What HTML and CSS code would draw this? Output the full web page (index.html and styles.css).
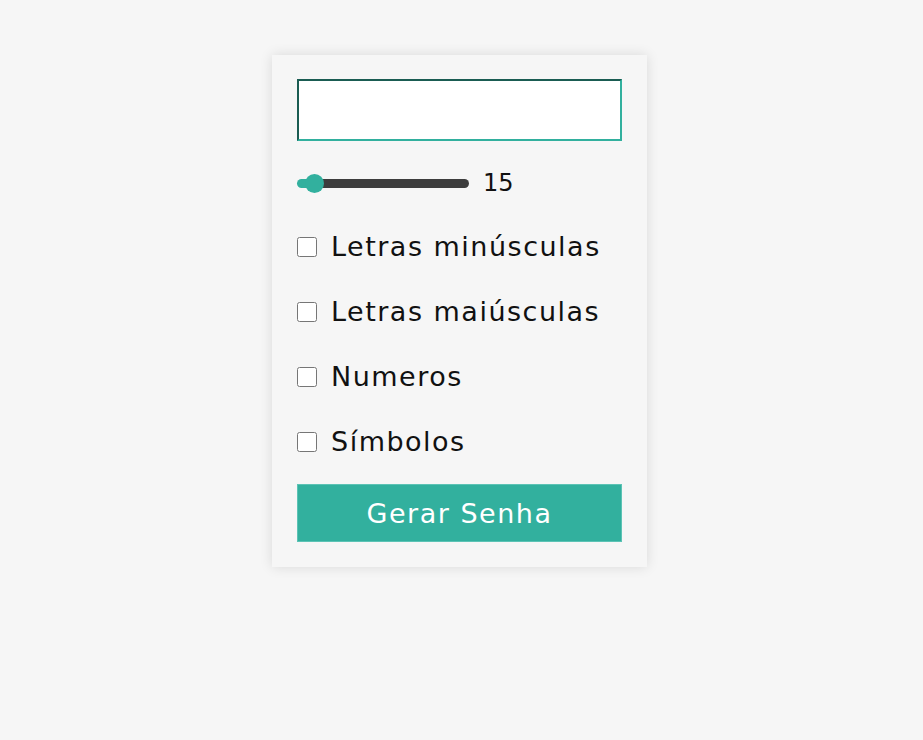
FILE: index.html
```html
<!DOCTYPE html>
<html lang="pt">
<head>
<meta charset="utf-8">
<title>Gerador de Senha</title>
<link rel="stylesheet" href="styles.css">
</head>
<body>
<main class="page">
  <section class="card">
    <input class="output" type="text" readonly>
    <div class="range-row">
      <input class="slider" type="range" min="12" max="70" value="15">
      <span class="range-value">15</span>
    </div>
    <label class="option"><input type="checkbox" class="check"><span>Letras minúsculas</span></label>
    <label class="option"><input type="checkbox" class="check"><span>Letras maiúsculas</span></label>
    <label class="option"><input type="checkbox" class="check"><span>Numeros</span></label>
    <label class="option"><input type="checkbox" class="check"><span>Símbolos</span></label>
    <button class="generate" type="button">Gerar Senha</button>
  </section>
</main>
</body>
</html>
```

FILE: styles.css
```css
* { box-sizing: border-box; }
html, body { margin: 0; padding: 0; }
html { background: #f6f6f6; }
body {
  background: #f6f6f6;
  min-height: 740px;
  font-family: "DejaVu Sans", "Liberation Sans", sans-serif;
  color: #111;
}
.page {
  display: flex;
  justify-content: center;
  padding: 55px 4px 40px 0;
}
.card {
  width: 375px;
  padding: 24px 25px 25px;
  background: #f6f6f6;
  box-shadow: 0 0 12px rgba(0, 0, 0, 0.12);
  display: flex;
  flex-direction: column;
}
.output {
  height: 62px;
  width: 100%;
  border: 2px inset #32b09e;
  background: #fff;
  margin: 0;
  outline: none;
}
.range-row {
  height: 42px;
  margin-top: 21px;
  display: flex;
  align-items: center;
  gap: 14px;
}
.slider {
  -webkit-appearance: none;
  appearance: none;
  width: 172px;
  height: 9px;
  margin: 0;
  border-radius: 5px;
  background: linear-gradient(to right, #32b09e 0 10px, #3d3d3d 10px);
  outline: none;
}
.slider::-webkit-slider-thumb {
  -webkit-appearance: none;
  appearance: none;
  width: 19px;
  height: 19px;
  border-radius: 50%;
  background: #32b09e;
  border: none;
}
.range-value {
  font-size: 24px;
  line-height: 1;
}
.option {
  height: 45px;
  margin-top: 20px;
  display: flex;
  align-items: center;
  gap: 14px;
  font-size: 27px;
  letter-spacing: 1.5px;
}
.check {
  width: 20px;
  height: 20px;
  margin: 0;
  flex: none;
}
.generate {
  height: 58px;
  margin-top: 20px;
  border: 1px solid #5cc3b5;
  background: #32b09e;
  color: #fff;
  font-family: inherit;
  font-size: 27px;
  letter-spacing: 1.5px;
  cursor: pointer;
}
```
